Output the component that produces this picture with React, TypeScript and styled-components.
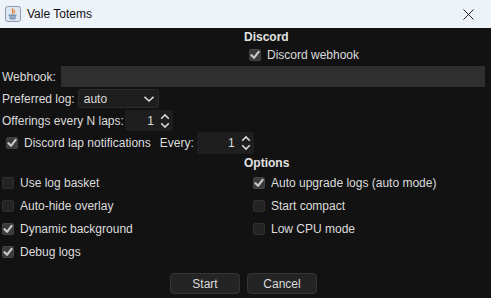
import React from "react";
import styled, { createGlobalStyle } from "styled-components";

const Global = createGlobalStyle`
  html, body { margin: 0; padding: 0; background: #121212; }
  body { font-family: "Liberation Sans", Arial, sans-serif; font-size: 12px; }
  * { box-sizing: border-box; }
`;

const Window = styled.div`
  width: 491px;
  height: 298px;
  display: flex;
  flex-direction: column;
  background: #121212;
  overflow: hidden;
`;

const TitleBar = styled.div`
  height: 28px;
  flex: none;
  background: #eef2f9;
  display: flex;
  align-items: center;
  padding-left: 5px;
  color: #111;
  font-size: 12px;
`;

const TitleText = styled.span`
  margin-left: 6px;
  flex: 1;
`;

const CloseBtn = styled.div`
  width: 46px;
  height: 28px;
  display: flex;
  align-items: center;
  justify-content: center;
`;

const Body = styled.div`
  display: flex;
  flex-direction: column;
  padding: 0 6px 0 2px;
  color: #dcdcdc;
`;

const Header = styled.div<{ $h: number; $indent: number }>`
  height: ${(p) => p.$h}px;
  display: flex;
  align-items: center;
  padding-left: ${(p) => p.$indent}px;
  font-weight: bold;
  color: #e2e2e2;
`;

const Row = styled.div<{ $h: number; $mt?: number; $indent?: number }>`
  height: ${(p) => p.$h}px;
  margin-top: ${(p) => p.$mt ?? 0}px;
  padding-left: ${(p) => p.$indent ?? 0}px;
  display: flex;
  align-items: center;
  white-space: nowrap;
`;

const Label = styled.span<{ $gap?: number; $lead?: number }>`
  margin-right: ${(p) => p.$gap ?? 5}px;
  margin-left: ${(p) => p.$lead ?? 0}px;
`;

const TextField = styled.div`
  flex: 1;
  height: 100%;
  background: #2f2f2f;
`;

const Combo = styled.div`
  width: 81px;
  height: 100%;
  background: #1e1e1e;
  border: 1px solid #2c2c2c;
  border-radius: 3px;
  display: flex;
  align-items: center;
  padding: 0 3px 0 5px;
  justify-content: space-between;
`;

const Spinner = styled.div<{ $w: number }>`
  width: ${(p) => p.$w}px;
  height: 100%;
  background: #1e1e1e;
  border-radius: 2px;
  display: flex;
  align-items: center;
  justify-content: flex-end;
  padding-right: 3px;
  gap: 6px;
`;

const BoxWrap = styled.span<{ $checked: boolean }>`
  width: 12px;
  height: 12px;
  flex: none;
  border-radius: 2px;
  background: ${(p) => (p.$checked ? "#3a3a3a" : "#232323")};
  border: 1px solid ${(p) => (p.$checked ? "#444" : "#303030")};
  display: inline-flex;
  align-items: center;
  justify-content: center;
  margin-right: 6px;
`;

const Check = ({ checked }: { checked: boolean }) => (
  <BoxWrap $checked={checked}>
    {checked && (
      <svg width="10" height="10" viewBox="0 0 10 10">
        <path d="M1.5 5.2 L4 7.8 L8.6 1.8" fill="none" stroke="#c8c8c8" strokeWidth="2.2" strokeLinecap="round" strokeLinejoin="round" />
      </svg>
    )}
  </BoxWrap>
);

const Item = styled.div`
  display: flex;
  align-items: center;
  white-space: nowrap;
`;

const CheckItem = ({ checked, label }: { checked: boolean; label: string }) => (
  <Item>
    <Check checked={checked} />
    <span>{label}</span>
  </Item>
);

const OptionsGrid = styled.div`
  display: grid;
  grid-template-columns: 251px 1fr;
  grid-auto-rows: 23px;
  align-items: center;
`;

const Buttons = styled.div`
  display: flex;
  justify-content: center;
  gap: 7px;
  margin-top: 10px;
`;

const Button = styled.div`
  width: 70px;
  height: 21px;
  background: #242424;
  border: 1px solid #353535;
  border-radius: 4px;
  display: flex;
  align-items: center;
  justify-content: center;
  color: #dcdcdc;
`;

const Chevron = () => (
  <svg width="12" height="8" viewBox="0 0 12 8">
    <path d="M1.5 1.8 L6 6 L10.5 1.8" fill="none" stroke="#d8d8d8" strokeWidth="1.6" />
  </svg>
);

const Arrows = () => (
  <svg width="10" height="16" viewBox="0 0 10 16">
    <path d="M1.2 5.8 L5 2 L8.8 5.8" fill="none" stroke="#d8d8d8" strokeWidth="1.6" />
    <path d="M1.2 10.2 L5 14 L8.8 10.2" fill="none" stroke="#d8d8d8" strokeWidth="1.6" />
  </svg>
);

const JavaIcon = () => (
  <svg width="16" height="16" viewBox="0 0 16 16">
    <rect x="0.5" y="0.5" width="15" height="15" rx="2" fill="#dfe6f0" stroke="#8a9bb4" />
    <path d="M8 2.5 C6 4.5 9.5 5.5 7.2 8" fill="none" stroke="#e2731c" strokeWidth="1.3" />
    <path d="M9.8 4 C8.6 5.2 10.4 6 9.2 7.5" fill="none" stroke="#e2731c" strokeWidth="1" />
    <path d="M3.5 9.2 H11.5 M4 11 H11 M4.8 12.8 H10.5" stroke="#4a6f9c" strokeWidth="1" />
  </svg>
);

export default function App() {
  return (
    <>
      <Global />
      <Window>
        <TitleBar>
          <JavaIcon />
          <TitleText>Vale Totems</TitleText>
          <CloseBtn>
            <svg width="11" height="11" viewBox="0 0 11 11">
              <path d="M0.5 0.5 L10.5 10.5 M10.5 0.5 L0.5 10.5" stroke="#222" strokeWidth="1" />
            </svg>
          </CloseBtn>
        </TitleBar>
        <Body>
          <Header $h={17} $indent={242}>Discord</Header>
          <Row $h={19} $indent={247}>
            <CheckItem checked label="Discord webhook" />
          </Row>
          <Row $h={21} $mt={2}>
            <Label>Webhook:</Label>
            <TextField />
          </Row>
          <Row $h={19} $mt={2}>
            <Label $gap={3}>Preferred log:</Label>
            <Combo>
              <span>auto</span>
              <Chevron />
            </Combo>
          </Row>
          <Row $h={21} $mt={2}>
            <Label $gap={1}>Offerings every N laps:</Label>
            <Spinner $w={48}>
              <span>1</span>
              <Arrows />
            </Spinner>
          </Row>
          <Row $h={22} $mt={1} $indent={4}>
            <CheckItem checked label="Discord lap notifications" />
            <Label $gap={3} $lead={9}>Every:</Label>
            <Spinner $w={57}>
              <span>1</span>
              <Arrows />
            </Spinner>
          </Row>
          <Header $h={17} $indent={242}>Options</Header>
          <OptionsGrid>
            <CheckItem checked={false} label="Use log basket" />
            <CheckItem checked label="Auto upgrade logs (auto mode)" />
            <CheckItem checked={false} label="Auto-hide overlay" />
            <CheckItem checked={false} label="Start compact" />
            <CheckItem checked label="Dynamic background" />
            <CheckItem checked={false} label="Low CPU mode" />
            <CheckItem checked label="Debug logs" />
          </OptionsGrid>
          <Buttons>
            <Button>Start</Button>
            <Button>Cancel</Button>
          </Buttons>
        </Body>
      </Window>
    </>
  );
}
